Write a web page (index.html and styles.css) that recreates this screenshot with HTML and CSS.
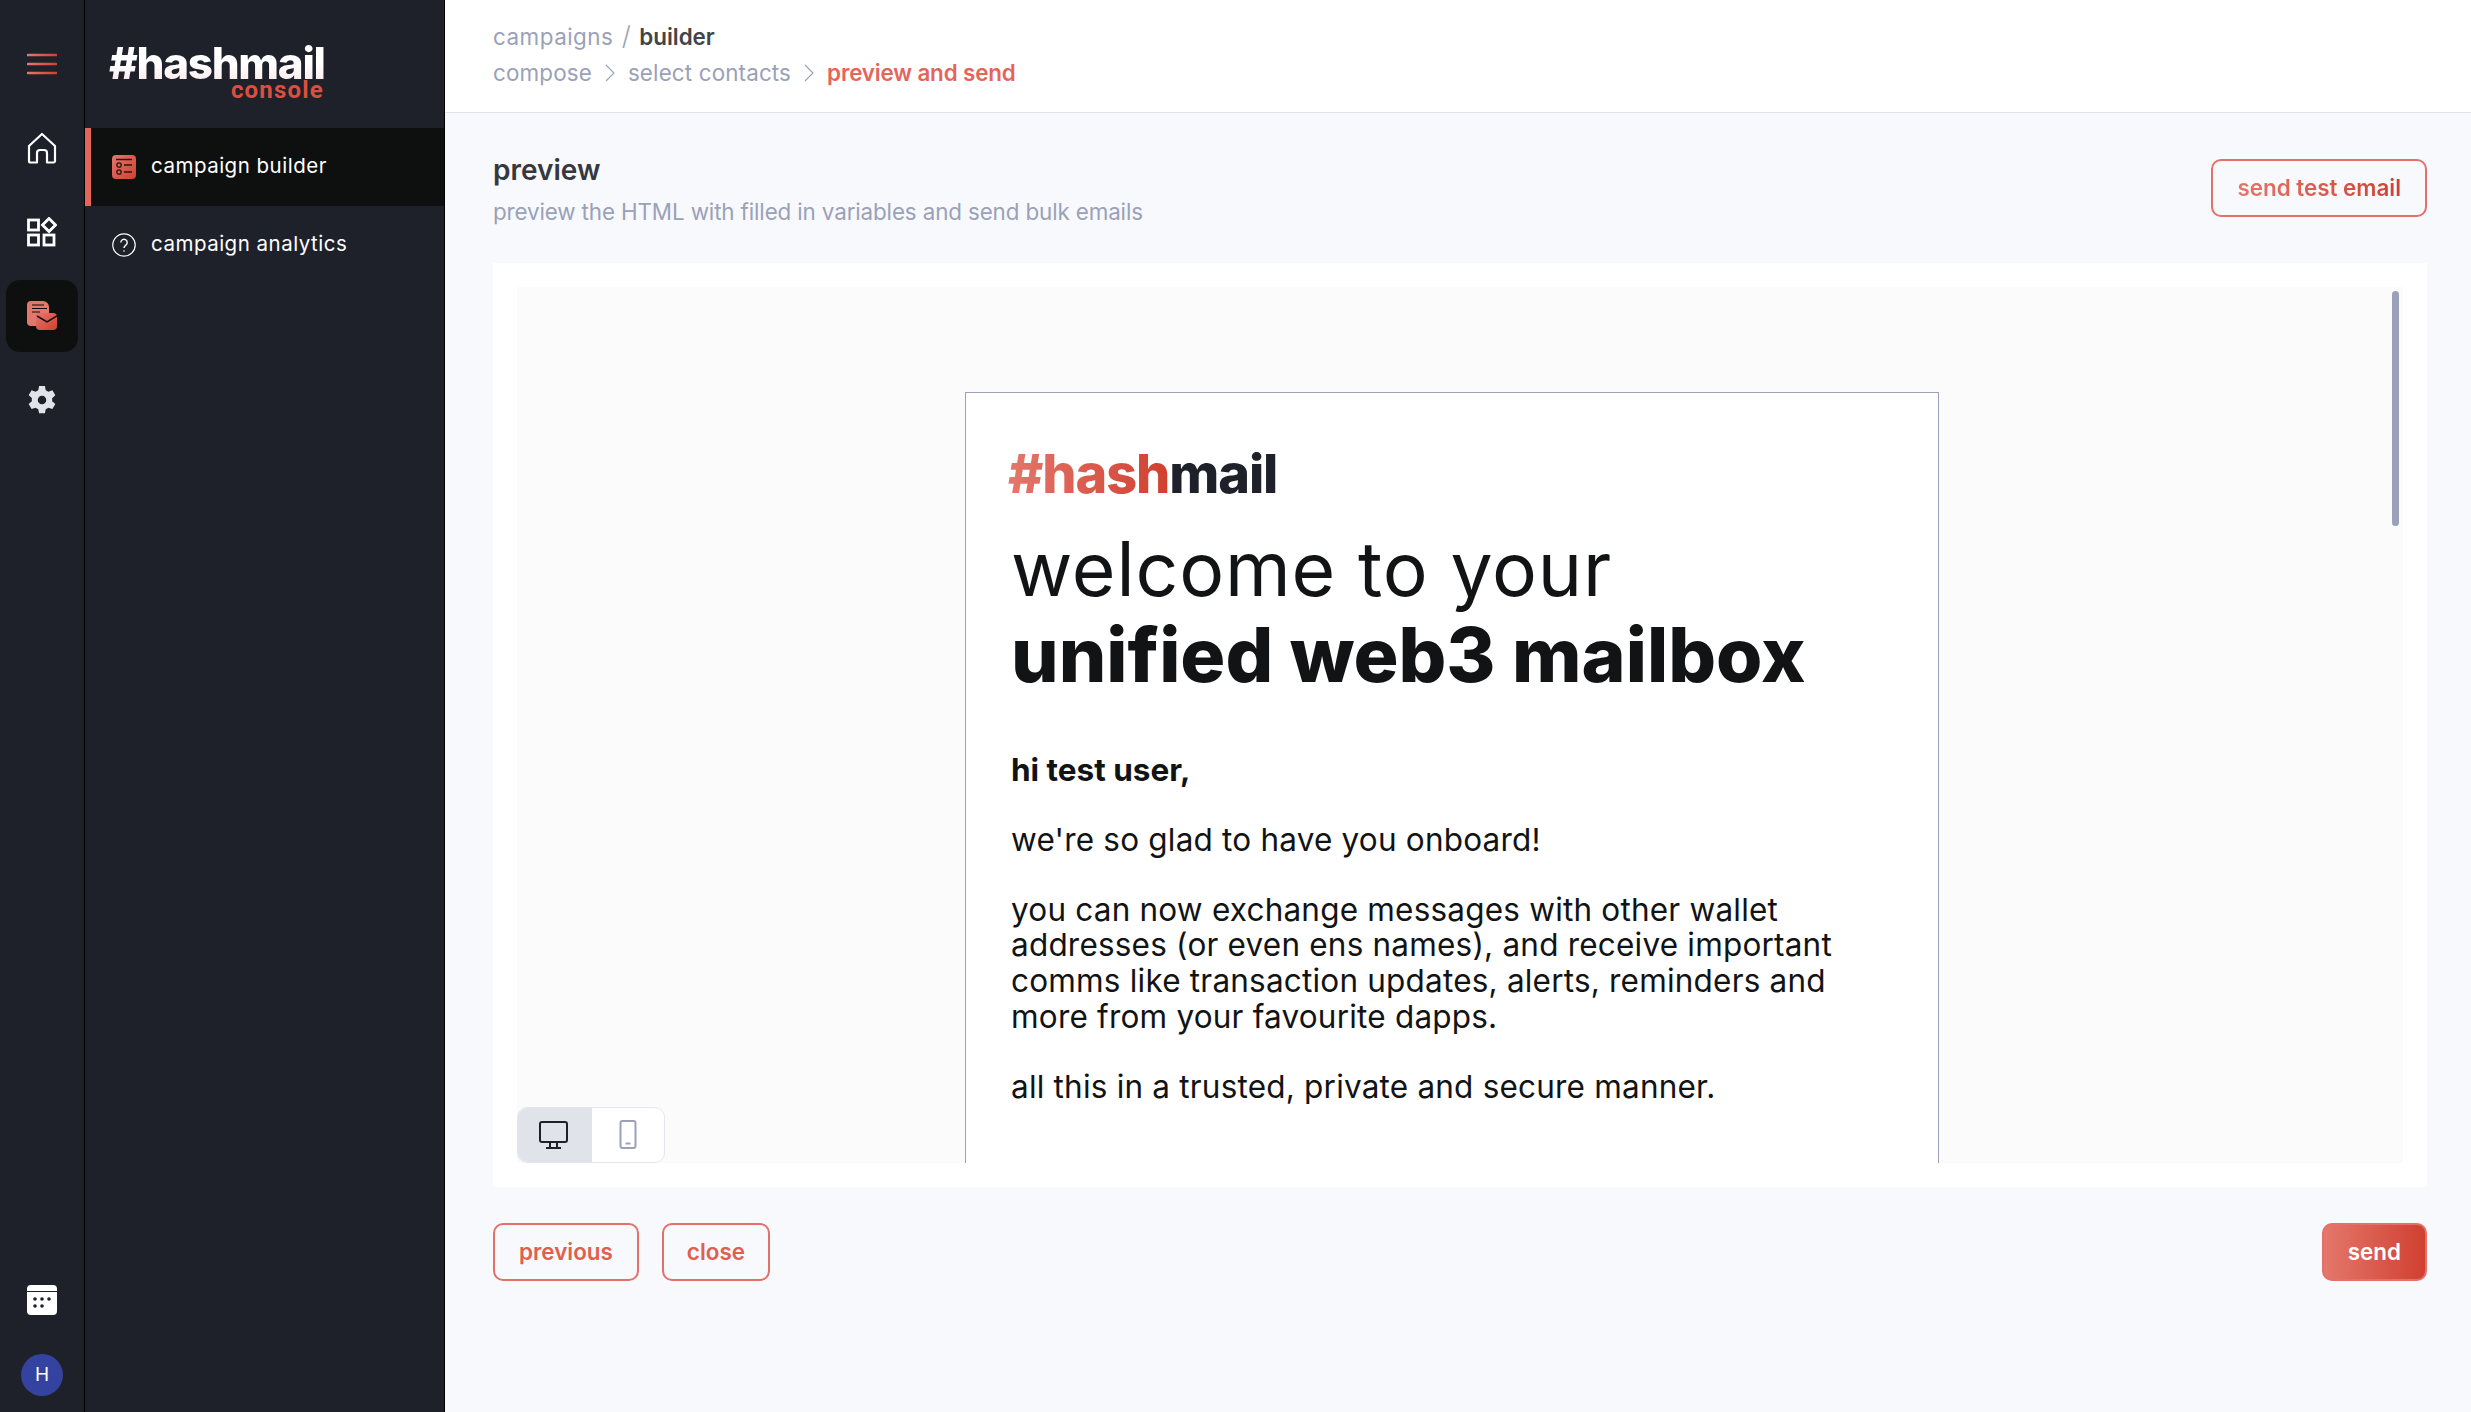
FILE: index.html
```html
<!DOCTYPE html>
<html>
<head>
  <meta charset="utf-8">
  <title>hashmail console</title>
  <link rel="stylesheet" href="styles.css">
</head>
<body>
<svg class="defs" width="0" height="0">
  <defs>
    <linearGradient id="red" x1="0" y1="0" x2="1" y2="1">
      <stop offset="0" stop-color="#e4776b"/>
      <stop offset="1" stop-color="#d04030"/>
    </linearGradient>
    <linearGradient id="redh" gradientUnits="userSpaceOnUse" x1="0" y1="0" x2="30" y2="0">
      <stop offset="0" stop-color="#e4776b"/>
      <stop offset="1" stop-color="#d04030"/>
    </linearGradient>
  </defs>
</svg>

<nav class="rail">
  <div class="rail-top">
    <div class="rail-item rail-menu">
      <svg width="30" height="22" viewBox="0 0 30 22"><path d="M1 2h28M1 11h28M1 20h28" fill="none" stroke="url(#redh)" stroke-width="2.6" stroke-linecap="round"/></svg>
    </div>
    <div class="rail-item">
      <svg width="30" height="32" viewBox="0 0 30 32" fill="none" stroke="#fff" stroke-width="2.2" stroke-linejoin="round"><path d="M15 2 2 14v15a1.5 1.5 0 0 0 1.5 1.5H10V21a3 3 0 0 1 3-3h4a3 3 0 0 1 3 3v9.500h6.500A1.500 1.500 0 0 0 28 29V14z"/></svg>
    </div>
    <div class="rail-item">
      <svg width="30" height="30" viewBox="0 0 30 30" fill="none" stroke="#fff" stroke-width="2.800"><rect x="1.500" y="3" width="10" height="10"/><rect x="1.500" y="18" width="10" height="10"/><rect x="17" y="18" width="10" height="10"/><path d="M22 1.500 28.500 8 22 14.500 15.500 8z"/></svg>
    </div>
    <div class="rail-item rail-active">
      <svg width="30" height="30" viewBox="0 0 30 30"><path d="M4 0h12a6 6 0 0 1 6 6v6H14a5 5 0 0 0-5 5v8H4a4 4 0 0 1-4-4V4a4 4 0 0 1 4-4z" fill="#e4776b"/><path d="M5 4h12M5 7.500h15M5 11h8" stroke="#0e1010" stroke-width="1.200"/><rect x="9" y="12" width="21" height="17" rx="4" fill="url(#red)"/><path d="M10 15l10 6 10-6" fill="none" stroke="#0e1010" stroke-width="1.500"/></svg>
    </div>
    <div class="rail-item">
      <svg width="28" height="30" viewBox="1.500 0.500 21 22"><path fill="#e0e3ea" fill-rule="evenodd" d="M14.200 1h-4.400l-.6 3.100a8.200 8.200 0 0 0-2 1.150L4.200 4.200 2 8l2.400 2.080a8.300 8.300 0 0 0 0 2.300L2 14.500l2.200 3.800 3-1.050a8.200 8.200 0 0 0 2 1.150l.6 3.100h4.400l.6-3.100a8.200 8.200 0 0 0 2-1.150l3 1.050 2.200-3.800-2.400-2.080a8.300 8.300 0 0 0 0-2.300L22 8l-2.200-3.800-3 1.050a8.200 8.200 0 0 0-2-1.150zM12 8.300a3.200 3.200 0 1 1 0 6.400 3.200 3.200 0 0 1 0-6.400z"/></svg>
    </div>
  </div>
  <div class="rail-bottom">
    <svg width="30" height="30" viewBox="0 0 30 30"><path d="M4 0h22a4 4 0 0 1 4 4v2H0V4a4 4 0 0 1 4-4z" fill="#fff"/><path d="M0 7h30v19a4 4 0 0 1-4 4H4a4 4 0 0 1-4-4z" fill="#fff"/><g fill="#1e212a"><circle cx="8" cy="14" r="1.800"/><circle cx="15" cy="14" r="1.800"/><circle cx="22" cy="14" r="1.800"/><circle cx="8" cy="21" r="1.800"/><circle cx="15" cy="21" r="1.800"/></g></svg>
    <div class="avatar">H</div>
  </div>
</nav>

<aside class="side">
  <div class="brand">
    <div class="brand-name">#hashmail</div>
    <div class="brand-sub">console</div>
  </div>
  <a class="side-link side-link-on">
    <svg width="24" height="24" viewBox="0 0 24 24"><rect width="24" height="24" rx="4" fill="url(#red)"/><path d="M4 4.500h16M12 10h8M12 17h8" stroke="#2a1512" stroke-width="1.300"/><circle cx="7" cy="10" r="2.200" fill="none" stroke="#2a1512" stroke-width="1.300"/><circle cx="7" cy="17" r="2.200" fill="none" stroke="#2a1512" stroke-width="1.300"/></svg>
    <span>campaign builder</span>
  </a>
  <a class="side-link">
    <svg width="24" height="24" viewBox="0 0 24 24" fill="none" stroke="#fff" stroke-width="1.200"><circle cx="12" cy="12" r="11.200"/><path d="M8.800 9.500a3.200 3.200 0 1 1 5 2.600c-1.100.8-1.800 1.400-1.800 2.900" stroke-width="1.400"/><circle cx="12" cy="18" r=".8" fill="#fff" stroke="none"/></svg>
    <span>campaign analytics</span>
  </a>
</aside>

<main class="main">
  <header class="top">
    <div class="crumbs"><span class="muted crumb-first">campaigns</span> <span class="muted slash">/</span> <b>builder</b></div>
    <div class="steps">
      <span class="muted">compose</span>
      <svg width="10" height="18" viewBox="0 0 10 18"><path d="M1 1l8 8-8 8" fill="none" stroke="#9aa1b8" stroke-width="1.100"/></svg>
      <span class="muted">select contacts</span>
      <svg width="10" height="18" viewBox="0 0 10 18"><path d="M1 1l8 8-8 8" fill="none" stroke="#9aa1b8" stroke-width="1.100"/></svg>
      <span class="step-on">preview and send</span>
    </div>
  </header>

  <section class="content">
    <div class="title-row">
      <div>
        <h1>preview</h1>
        <p>preview the HTML with filled in variables and send bulk emails</p>
      </div>
      <button class="btn"><span class="red-text">send test email</span></button>
    </div>

    <div class="panel">
      <div class="preview">
        <div class="mail">
          <div class="mail-logo"><span class="red-text">#hash</span>mail</div>
          <h2><span class="h2-light">welcome to your</span><br><strong>unified web3 mailbox</strong></h2>
          <p class="hi">hi test user,</p>
          <p>we're so glad to have you onboard!</p>
          <p>you can now exchange messages with other wallet<br>addresses (or even ens names), and receive important<br>comms like transaction updates, alerts, reminders and<br>more from your favourite dapps.</p>
          <p>all this in a trusted, private and secure manner.</p>
        </div>
        <div class="scroll-thumb"></div>
        <div class="toggle">
          <div class="toggle-btn toggle-on">
            <svg width="30" height="28" viewBox="0 0 30 28" fill="none" stroke="#1e212a" stroke-width="2"><rect x="1" y="1" width="27" height="20" rx="2"/><path d="M11 21v5M18 21v5M7 27h15"/></svg>
          </div>
          <div class="toggle-btn">
            <svg width="18" height="30" viewBox="0 0 18 30" fill="none" stroke="#9aa1b8" stroke-width="2"><rect x="1.500" y="1" width="15" height="27" rx="2"/><path d="M6.500 23.500h5"/></svg>
          </div>
        </div>
      </div>
    </div>

    <div class="actions">
      <div class="actions-left">
        <button class="btn"><span class="flat-red">previous</span></button>
        <button class="btn btn-close"><span class="flat-red">close</span></button>
      </div>
      <button class="btn btn-solid">send</button>
    </div>
  </section>
</main>
</body>
</html>
```

FILE: styles.css
```css
html, body {
  margin: 0;
  padding: 0;
  height: 100%;
}

body {
  display: flex;
  height: 1412px;
  overflow: hidden;
  font-family: Inter, "Open Sans", sans-serif;
  background: #f8f9fd;
}

.defs { position: absolute; }

/* left icon rail */
.rail {
  width: 84px;
  flex: none;
  display: flex;
  flex-direction: column;
  justify-content: space-between;
  background: #1e212a;
  border-right: 1px solid #000;
}

.rail-top {
  display: flex;
  flex-direction: column;
  align-items: center;
  gap: 12px;
  padding-top: 28px;
}

.rail-item {
  width: 72px;
  height: 72px;
  display: flex;
  align-items: center;
  justify-content: center;
  border-radius: 14px;
}

.rail-active { background: #0e1010; }

.rail-bottom {
  display: flex;
  flex-direction: column;
  align-items: center;
  gap: 39px;
  padding-bottom: 16px;
}

.avatar {
  width: 42px;
  height: 42px;
  border-radius: 50%;
  background: #3443a0;
  color: #fff;
  font-size: 19px;
  line-height: 42px;
  text-align: center;
}

/* campaign sidebar */
.side {
  width: 359px;
  flex: none;
  background: #1e212a;
  border-right: 1px solid #000;
}

.brand {
  height: 128px;
  box-sizing: border-box;
  padding: 45px 0 0 24px;
}

.brand-name {
  width: 224px;
  font-size: 44px;
  font-weight: 800;
  line-height: 36px;
  letter-spacing: -1.300px;
  background: linear-gradient(180deg, #fff 50%, #fdeaec 100%);
  -webkit-background-clip: text;
  background-clip: text;
  color: transparent;
}

.brand-sub {
  width: 215px;
  margin-top: 1px;
  text-align: right;
  font-family: Roboto, sans-serif;
  font-size: 24px;
  font-weight: 700;
  line-height: 16px;
  letter-spacing: 1.200px;
  color: #d9503f;
}

.side-link {
  display: flex;
  align-items: center;
  gap: 15px;
  height: 78px;
  padding-left: 27px;
  font-size: 20.500px;
  letter-spacing: 0.500px;
  color: #fff;
}

.side-link span { margin-top: -3px; }

.side-link-on {
  background: #0e1010;
  box-shadow: inset 6px 0 0 #e4655a;
}

/* main area */
.main {
  flex: 1;
  min-width: 0;
  display: flex;
  flex-direction: column;
}

.top {
  height: 113px;
  box-sizing: border-box;
  padding: 18px 0 0 48px;
  background: #fff;
  border-bottom: 1px solid #e0e3ea;
  font-size: 22.400px;
  line-height: 36px;
}

.muted {
  color: #9aa1b8;
  letter-spacing: 0.150px;
}

.crumb-first { letter-spacing: 0.500px; }

.slash {
  margin: 0 2px;
  font-size: 26px;
  font-weight: 300;
}

.crumbs b { color: #42444a; font-weight: 600; }

.steps {
  display: flex;
  align-items: center;
  gap: 13px;
}

.step-on {
  color: #e4655a;
  font-weight: 600;
  letter-spacing: -0.150px;
}

.content {
  flex: 1;
  padding: 0 44px 0 48px;
}

.title-row {
  display: flex;
  justify-content: space-between;
  align-items: center;
  height: 150px;
}

h1 {
  margin: 2px 0 0;
  font-size: 28px;
  font-weight: 600;
  line-height: 40px;
  color: #36383d;
}

.title-row p {
  margin: 5px 0 0;
  font-size: 22.400px;
  line-height: 34px;
  letter-spacing: -0.130px;
  color: #9aa1b8;
}

.btn {
  height: 58px;
  box-sizing: border-box;
  padding: 0 24px 2px;
  border: 2px solid #e4706a;
  border-radius: 10px;
  background: transparent;
  font-family: inherit;
  font-size: 22.400px;
  font-weight: 600;
  color: #e0604f;
}

.btn-close { padding: 0 23px 2px; }

.btn-solid {
  color: #fff;
  background: linear-gradient(90deg, #e4776b, #d04030);
}

.red-text {
  background: linear-gradient(90deg, #e4776b, #d04030);
  -webkit-background-clip: text;
  background-clip: text;
  color: transparent;
}

.flat-red { color: #e0604f; }

.panel {
  height: 924px;
  box-sizing: border-box;
  padding: 24px;
  background: #fff;
}

.preview {
  position: relative;
  height: 100%;
  box-sizing: border-box;
  padding: 105px 16px 0 0;
  overflow: hidden;
  background: #fbfbfc;
}

.mail {
  width: 974px;
  height: 900px;
  margin: 0 auto;
  box-sizing: border-box;
  padding: 55px 45px 0;
  background: #fff;
  border: 1px solid #9aa1b8;
  color: #111315;
}

.mail-logo {
  margin-left: -3px;
  font-size: 54px;
  font-weight: 800;
  line-height: 52px;
  letter-spacing: -1.100px;
  color: #1e212a;
}

.mail h2 {
  margin: 26px 0 0;
  font-size: 75px;
  font-weight: 400;
  line-height: 86px;
}

.h2-light { letter-spacing: 0.850px; }

.mail h2 strong { font-weight: 800; }

.mail p {
  margin: 0 0 34px;
  font-size: 31.500px;
  line-height: 35.800px;
  letter-spacing: 0.200px;
}

.mail .hi {
  margin-top: 54px;
  font-weight: 700;
  letter-spacing: 0;
}

.scroll-thumb {
  position: absolute;
  top: 4px;
  right: 4px;
  width: 7px;
  height: 235px;
  border-radius: 4px;
  background: #9aa1b8;
}

.toggle {
  position: absolute;
  left: 0;
  bottom: 0;
  display: flex;
  height: 56px;
  box-sizing: border-box;
  border: 1px solid #e4e6ec;
  border-radius: 10px;
  overflow: hidden;
  background: #fff;
}

.toggle-btn {
  width: 72px;
  display: flex;
  align-items: center;
  justify-content: center;
}

.toggle-on {
  width: 74px;
  padding-right: 2px;
  box-sizing: border-box;
  background: #e0e3ea;
}

.actions {
  display: flex;
  justify-content: space-between;
  margin-top: 36px;
}

.actions-left {
  display: flex;
  gap: 23px;
}
```
